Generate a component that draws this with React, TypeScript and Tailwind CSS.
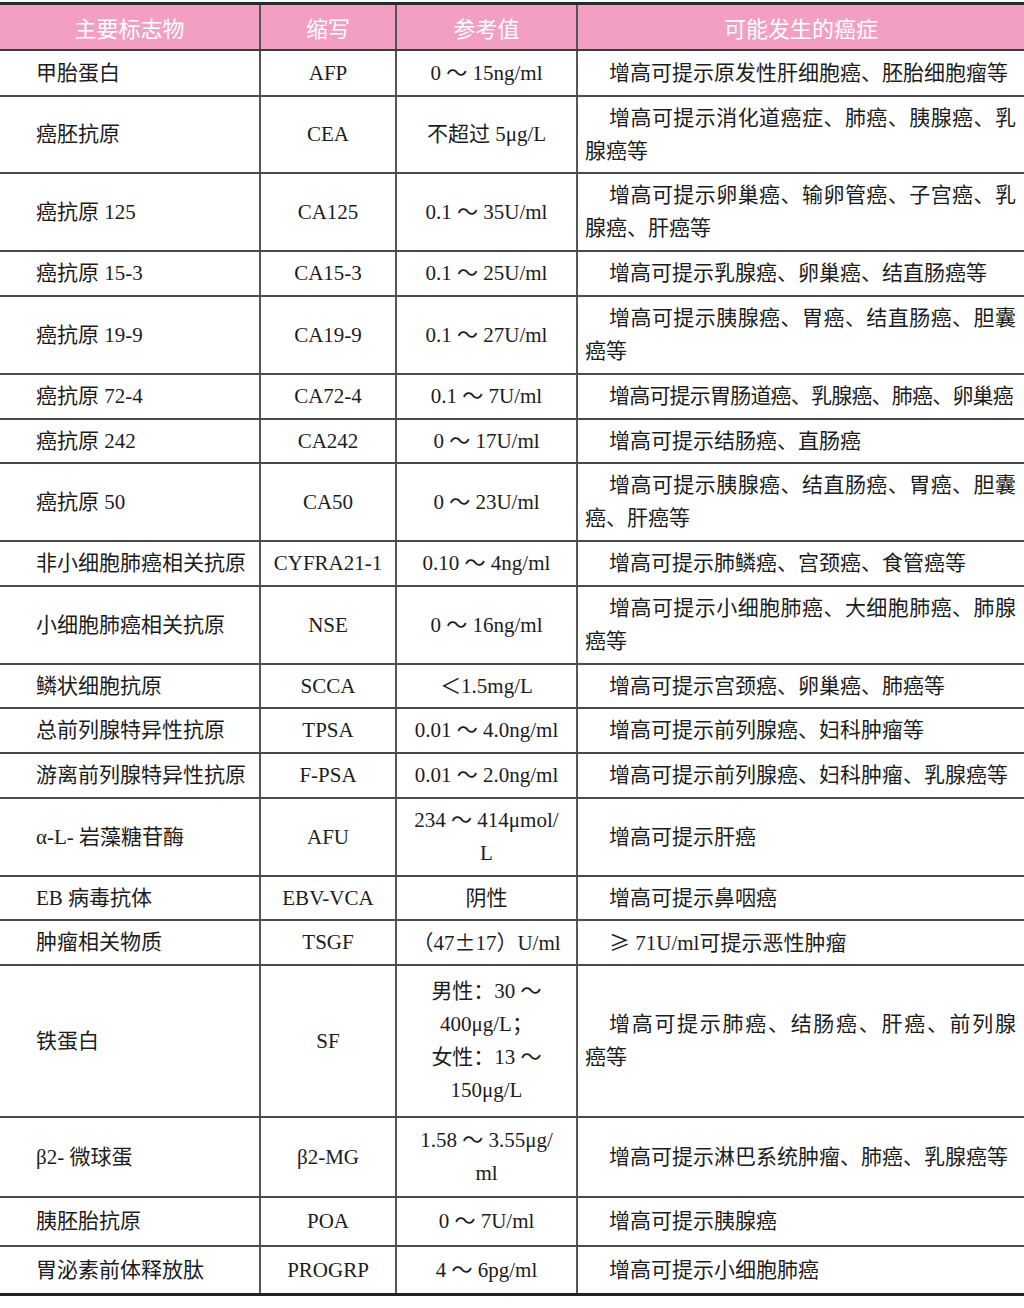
const rows: {
  name: string;
  abbr: string;
  ref: React.ReactNode[];
  note: React.ReactNode[];
  h: string;
  tight?: boolean;
}[] = [
  { name: "甲胎蛋白", abbr: "AFP", ref: ["0 ～ 15ng/ml"], note: ["增高可提示原发性肝细胞癌、胚胎细胞瘤等"], h: "h-[46px]" },
  { name: "癌胚抗原", abbr: "CEA", ref: ["不超过 5μg/L"], note: ["增高可提示消化道癌症、肺癌、胰腺癌、乳", "腺癌等"], h: "h-[77px]" },
  { name: "癌抗原 125", abbr: "CA125", ref: ["0.1 ～ 35U/ml"], note: ["增高可提示卵巢癌、输卵管癌、子宫癌、乳", "腺癌、肝癌等"], h: "h-[78px]" },
  { name: "癌抗原 15-3", abbr: "CA15-3", ref: ["0.1 ～ 25U/ml"], note: ["增高可提示乳腺癌、卵巢癌、结直肠癌等"], h: "h-[45px]" },
  { name: "癌抗原 19-9", abbr: "CA19-9", ref: ["0.1 ～ 27U/ml"], note: ["增高可提示胰腺癌、胃癌、结直肠癌、胆囊", "癌等"], h: "h-[78px]" },
  { name: "癌抗原 72-4", abbr: "CA72-4", ref: ["0.1 ～ 7U/ml"], note: ["增高可提示胃肠道癌、乳腺癌、肺癌、卵巢癌"], h: "h-[45px]", tight: true },
  { name: "癌抗原 242", abbr: "CA242", ref: ["0 ～ 17U/ml"], note: ["增高可提示结肠癌、直肠癌"], h: "h-[44px]" },
  { name: "癌抗原 50", abbr: "CA50", ref: ["0 ～ 23U/ml"], note: ["增高可提示胰腺癌、结直肠癌、胃癌、胆囊", "癌、肝癌等"], h: "h-[78px]" },
  { name: "非小细胞肺癌相关抗原", abbr: "CYFRA21-1", ref: ["0.10 ～ 4ng/ml"], note: ["增高可提示肺鳞癌、宫颈癌、食管癌等"], h: "h-[45px]" },
  { name: "小细胞肺癌相关抗原", abbr: "NSE", ref: ["0 ～ 16ng/ml"], note: ["增高可提示小细胞肺癌、大细胞肺癌、肺腺", "癌等"], h: "h-[78px]" },
  { name: "鳞状细胞抗原", abbr: "SCCA", ref: ["＜1.5mg/L"], note: ["增高可提示宫颈癌、卵巢癌、肺癌等"], h: "h-[44px]" },
  { name: "总前列腺特异性抗原", abbr: "TPSA", ref: ["0.01 ～ 4.0ng/ml"], note: ["增高可提示前列腺癌、妇科肿瘤等"], h: "h-[45px]" },
  { name: "游离前列腺特异性抗原", abbr: "F-PSA", ref: ["0.01 ～ 2.0ng/ml"], note: ["增高可提示前列腺癌、妇科肿瘤、乳腺癌等"], h: "h-[45px]" },
  { name: "α-L- 岩藻糖苷酶", abbr: "AFU", ref: ["234 ～ 414μmol/", "L"], note: ["增高可提示肝癌"], h: "h-[78px]" },
  { name: "EB 病毒抗体", abbr: "EBV-VCA", ref: ["阴性"], note: ["增高可提示鼻咽癌"], h: "h-[44px]" },
  {
    name: "肿瘤相关物质",
    abbr: "TSGF",
    ref: [
      <>
        （47<span className="font-['Noto_Sans_CJK_SC',sans-serif]">±</span>17）U/ml
      </>,
    ],
    note: [
      <>
        <span className="font-['Noto_Sans_CJK_SC',sans-serif]">≥</span> 71U/ml可提示恶性肿瘤
      </>,
    ],
    h: "h-[45px]",
  },
  {
    name: "铁蛋白",
    abbr: "SF",
    ref: ["男性：30 ～", "400μg/L；", "女性：13 ～", "150μg/L"],
    note: ["增高可提示肺癌、结肠癌、肝癌、前列腺", "癌等"],
    h: "h-[152px]",
  },
  { name: "β2- 微球蛋", abbr: "β2-MG", ref: ["1.58 ～ 3.55μg/", "ml"], note: ["增高可提示淋巴系统肿瘤、肺癌、乳腺癌等"], h: "h-[80px]" },
  { name: "胰胚胎抗原", abbr: "POA", ref: ["0 ～ 7U/ml"], note: ["增高可提示胰腺癌"], h: "h-[49px]" },
  { name: "胃泌素前体释放肽", abbr: "PROGRP", ref: ["4 ～ 6pg/ml"], note: ["增高可提示小细胞肺癌"], h: "h-[49px]" },
];

const cols = "grid grid-cols-[261px_136px_181px_446px]";

export default function App() {
  return (
    <div className="w-[1024px] h-[1308px] bg-white pt-[2px] text-[#1c1c1c] font-['Liberation_Serif','Noto_Sans_CJK_SC',serif] text-[21px] leading-[33px]">
      <div className="border-t-[3px] border-[#2a2a2a]">
        <div className={`${cols} h-[46px] bg-[#f39ec3] border-b-2 border-[#3c3c3c] text-white text-[22px] font-['Noto_Sans_CJK_SC',sans-serif]`}>
          <div className="flex items-center justify-center border-r-2 border-[#555]">主要标志物</div>
          <div className="flex items-center justify-center border-r-2 border-[#555]">缩写</div>
          <div className="flex items-center justify-center border-r-2 border-[#555]">参考值</div>
          <div className="flex items-center justify-center">可能发生的癌症</div>
        </div>

        {rows.map((r, i) => (
          <div
            key={r.abbr}
            className={`${cols} ${r.h} ${
              i === rows.length - 1 ? "border-b-[3px] border-[#222]" : "border-b-2 border-[#4a4a4a]"
            }`}
          >
            <div className="flex items-center pl-[36px] border-r-2 border-[#555]">{r.name}</div>
            <div className="flex items-center justify-center border-r-2 border-[#555]">{r.abbr}</div>
            <div className="flex flex-col items-center justify-center text-center border-r-2 border-[#555]">
              {r.ref.map((line, k) => (
                <span key={k}>{line}</span>
              ))}
            </div>
            <div className="flex flex-col justify-center pl-[7px] pr-[8px]">
              {r.note.length > 1 ? (
                <>
                  <span className="block whitespace-nowrap indent-[24px] text-justify [text-align-last:justify]">{r.note[0]}</span>
                  <span className="block">{r.note[1]}</span>
                </>
              ) : (
                <p className={`whitespace-nowrap indent-[24px] ${r.tight ? "tracking-[-0.8px]" : ""}`}>{r.note[0]}</p>
              )}
            </div>
          </div>
        ))}
      </div>
    </div>
  );
}
